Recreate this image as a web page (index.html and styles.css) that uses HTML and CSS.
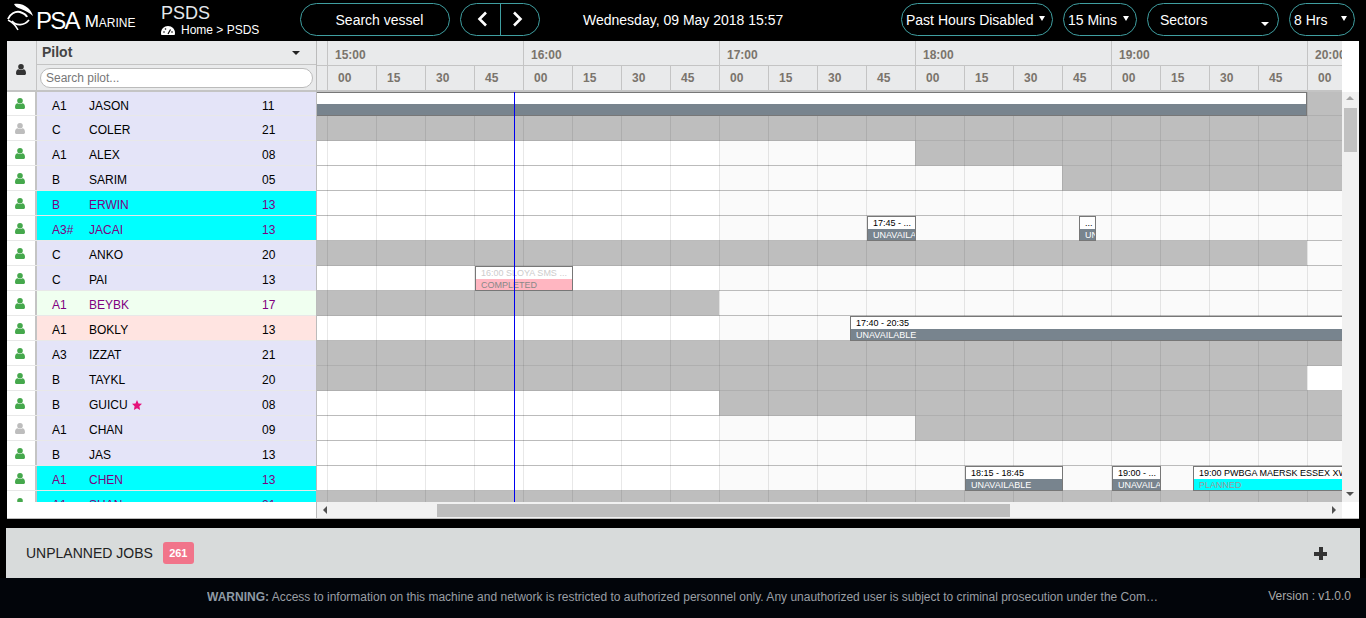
FILE: index.html
```html
<!DOCTYPE html>
<html lang="en">
<head>
  <meta charset="UTF-8">
  <title>PSDS - PSA Marine</title>
  <link rel="stylesheet" href="styles.css">
</head>
<body>

<svg class="icon-defs" width="0" height="0">
  <symbol id="user" viewBox="0 0 10 11">
    <circle cx="5" cy="2.8" r="2.8"/>
    <path d="M0 9.2C0 6.6 1.2 5.2 2.6 5.2 3.3 5.8 4.1 6.1 5 6.1S6.7 5.8 7.4 5.2C8.8 5.2 10 6.6 10 9.2 10 10.3 9.3 11 8.4 11H1.6C.7 11 0 10.3 0 9.2Z"/>
  </symbol>
</svg>

<header class="topbar">
  <div class="logo">
    <svg class="logo-bird" viewBox="0 0 30 28" width="30" height="28">
      <path fill="#fff" d="M8 1C12 0 18 1 22 5 25 8 26 10 27 13 24 10 20 8 15 6 11 5 9 3 8 1Z"/>
      <path fill="none" stroke="#fff" stroke-width="2" d="M2 16C4 11 9 8 14 9 17 10 20 11 21 14"/>
      <path fill="none" stroke="#fff" stroke-width="1.800" d="M6 18C10 23 18 23 23 17"/>
      <path fill="none" stroke="#fff" stroke-width="1.500" d="M2 17C6 19 10 23 12 27"/>
    </svg>
    <span class="logo-psa">PSA</span>
    <span class="logo-marine">Marine</span>
  </div>
  <div class="crumbs">
    <div class="crumbs-title">PSDS</div>
    <div class="crumbs-path">
      <svg viewBox="0 0 14 9" width="14" height="9">
        <path fill="#fff" d="M7 0C3 0 0 3 0 7 0 8 .3 9 .5 9H13.500C13.700 9 14 8 14 7 14 3 11 0 7 0Z"/>
        <path stroke="#000" stroke-width="1.200" d="M7 8 9.500 3.500"/>
        <circle cx="3" cy="6" r=".8"/><circle cx="4.500" cy="3" r=".8"/><circle cx="11" cy="6" r=".8"/>
      </svg>
      <span>Home &gt; PSDS</span>
    </div>
  </div>
  <button class="pill pill-search">Search vessel</button>
  <div class="pill pill-nav">
    <button class="nav-btn nav-prev">
      <svg viewBox="0 0 10 16" width="10" height="16"><path d="M9 1.500 2.500 8 9 14.500" fill="none" stroke="#fff" stroke-width="2.600"/></svg>
    </button>
    <button class="nav-btn nav-next">
      <svg viewBox="0 0 10 16" width="10" height="16"><path d="M1 1.500 7.500 8 1 14.500" fill="none" stroke="#fff" stroke-width="2.600"/></svg>
    </button>
  </div>
  <div class="clock">Wednesday, 09 May 2018 15:57</div>
  <div class="filters">
    <div class="pill pill-select pill-past">Past Hours Disabled<i class="caret caret-high"></i></div>
    <div class="pill pill-select pill-mins">15 Mins<i class="caret caret-high"></i></div>
    <div class="pill pill-select pill-sectors">Sectors<i class="caret caret-low"></i></div>
    <div class="pill pill-select pill-hrs">8 Hrs<i class="caret caret-high"></i></div>
  </div>
</header>

<section class="sched">
  <div class="side">
    <div class="side-head">
      <div class="side-head-icon"><svg class="ico ico-dark"><use href="#user"/></svg></div>
      <div class="side-head-main">
        <div class="side-title">Pilot<i class="caret caret-dark"></i></div>
        <div class="side-search"><input type="text" placeholder="Search pilot..."></div>
      </div>
    </div>
    <div class="side-rows">
      <div class="pilot"><span class="pilot-icon"><svg class="ico"><use href="#user"/></svg></span><div class="pilot-info"><span>A1</span><span>JASON</span><span>11</span></div></div>
      <div class="pilot"><span class="pilot-icon"><svg class="ico ico-off"><use href="#user"/></svg></span><div class="pilot-info"><span>C</span><span>COLER</span><span>21</span></div></div>
      <div class="pilot"><span class="pilot-icon"><svg class="ico"><use href="#user"/></svg></span><div class="pilot-info"><span>A1</span><span>ALEX</span><span>08</span></div></div>
      <div class="pilot"><span class="pilot-icon"><svg class="ico"><use href="#user"/></svg></span><div class="pilot-info"><span>B</span><span>SARIM</span><span>05</span></div></div>
      <div class="pilot"><span class="pilot-icon"><svg class="ico"><use href="#user"/></svg></span><div class="pilot-info is-cyan"><span>B</span><span>ERWIN</span><span>13</span></div></div>
      <div class="pilot"><span class="pilot-icon"><svg class="ico"><use href="#user"/></svg></span><div class="pilot-info is-cyan"><span>A3#</span><span>JACAI</span><span>13</span></div></div>
      <div class="pilot"><span class="pilot-icon"><svg class="ico"><use href="#user"/></svg></span><div class="pilot-info"><span>C</span><span>ANKO</span><span>20</span></div></div>
      <div class="pilot"><span class="pilot-icon"><svg class="ico"><use href="#user"/></svg></span><div class="pilot-info"><span>C</span><span>PAI</span><span>13</span></div></div>
      <div class="pilot"><span class="pilot-icon"><svg class="ico"><use href="#user"/></svg></span><div class="pilot-info is-green"><span>A1</span><span>BEYBK</span><span>17</span></div></div>
      <div class="pilot"><span class="pilot-icon"><svg class="ico"><use href="#user"/></svg></span><div class="pilot-info is-rose"><span>A1</span><span>BOKLY</span><span>13</span></div></div>
      <div class="pilot"><span class="pilot-icon"><svg class="ico"><use href="#user"/></svg></span><div class="pilot-info"><span>A3</span><span>IZZAT</span><span>21</span></div></div>
      <div class="pilot"><span class="pilot-icon"><svg class="ico"><use href="#user"/></svg></span><div class="pilot-info"><span>B</span><span>TAYKL</span><span>20</span></div></div>
      <div class="pilot"><span class="pilot-icon"><svg class="ico"><use href="#user"/></svg></span><div class="pilot-info"><span>B</span><span>GUICU <svg class="star" viewBox="0 0 20 20" width="10" height="10"><path d="M10 0l3 6.800 7 .8-5.200 4.800L16.200 20 10 16.300 3.800 20l1.400-7.600L0 7.600l7-.8Z"/></svg></span><span>08</span></div></div>
      <div class="pilot"><span class="pilot-icon"><svg class="ico ico-off"><use href="#user"/></svg></span><div class="pilot-info"><span>A1</span><span>CHAN</span><span>09</span></div></div>
      <div class="pilot"><span class="pilot-icon"><svg class="ico"><use href="#user"/></svg></span><div class="pilot-info"><span>B</span><span>JAS</span><span>13</span></div></div>
      <div class="pilot"><span class="pilot-icon"><svg class="ico"><use href="#user"/></svg></span><div class="pilot-info is-cyan"><span>A1</span><span>CHEN</span><span>13</span></div></div>
      <div class="pilot"><span class="pilot-icon"><svg class="ico"><use href="#user"/></svg></span><div class="pilot-info is-cyan"><span>A1</span><span>SHAN</span><span>21</span></div></div>
    </div>
    <div class="side-foot"></div>
  </div>

  <div class="main">
    <div class="time-head">
      <div class="time-cols">
        <div class="hours">
          <div class="hour-gap"></div>
          <div class="hour">15:00</div><div class="hour">16:00</div><div class="hour">17:00</div>
          <div class="hour">18:00</div><div class="hour">19:00</div><div class="hour">20:00</div>
        </div>
        <div class="quarters">
          <div class="hour-gap"></div>
          <div class="qtr">00</div><div class="qtr">15</div><div class="qtr">30</div><div class="qtr">45</div>
          <div class="qtr">00</div><div class="qtr">15</div><div class="qtr">30</div><div class="qtr">45</div>
          <div class="qtr">00</div><div class="qtr">15</div><div class="qtr">30</div><div class="qtr">45</div>
          <div class="qtr">00</div><div class="qtr">15</div><div class="qtr">30</div><div class="qtr">45</div>
          <div class="qtr">00</div><div class="qtr">15</div><div class="qtr">30</div><div class="qtr">45</div>
          <div class="qtr">00</div>
        </div>
      </div>
    </div>

    <div class="body">
      <div class="rows">
        <div class="grid-lines"></div>
        <div class="now-line"></div>

        <div class="row"><i class="seg white" style="width:990px"></i><i class="seg grey"></i>
          <div class="event" style="left:-2px;width:992px"><b></b><em class="ev-off"></em></div>
        </div>
        <div class="row"><i class="seg grey"></i></div>
        <div class="row"><i class="seg white" style="width:402px"></i><i class="seg light" style="width:196px"></i><i class="seg grey"></i></div>
        <div class="row"><i class="seg white" style="width:402px"></i><i class="seg light" style="width:343px"></i><i class="seg grey"></i></div>
        <div class="row"><i class="seg white" style="width:402px"></i><i class="seg light"></i></div>
        <div class="row"><i class="seg white" style="width:402px"></i><i class="seg light"></i>
          <div class="event" style="left:550px;width:49px"><b>17:45 - ...</b><em class="ev-off">UNAVAILABLE</em></div>
          <div class="event" style="left:762px;width:17px"><b>...</b><em class="ev-off">UNAVAILABLE</em></div>
        </div>
        <div class="row"><i class="seg grey" style="width:990px"></i><i class="seg light"></i></div>
        <div class="row"><i class="seg white" style="width:402px"></i><i class="seg light"></i>
          <div class="event ev-done" style="left:158px;width:98px"><b>16:00 SLOYA SMS ...</b><em>COMPLETED</em></div>
        </div>
        <div class="row"><i class="seg grey" style="width:402px"></i><i class="seg light"></i></div>
        <div class="row"><i class="seg white" style="width:402px"></i><i class="seg light"></i>
          <div class="event" style="left:533px;width:500px"><b>17:40 - 20:35</b><em class="ev-off">UNAVAILABLE</em></div>
        </div>
        <div class="row"><i class="seg grey"></i></div>
        <div class="row"><i class="seg grey" style="width:990px"></i><i class="seg white"></i></div>
        <div class="row"><i class="seg white" style="width:402px"></i><i class="seg grey"></i></div>
        <div class="row"><i class="seg white" style="width:402px"></i><i class="seg light" style="width:196px"></i><i class="seg grey"></i></div>
        <div class="row"><i class="seg white" style="width:402px"></i><i class="seg light"></i></div>
        <div class="row"><i class="seg white" style="width:402px"></i><i class="seg light"></i>
          <div class="event" style="left:648px;width:98px"><b>18:15 - 18:45</b><em class="ev-off">UNAVAILABLE</em></div>
          <div class="event" style="left:795px;width:49px"><b>19:00 - ...</b><em class="ev-off">UNAVAILABLE</em></div>
          <div class="event ev-plan" style="left:876px;width:200px"><b>19:00 PWBGA MAERSK ESSEX XW</b><em>PLANNED</em></div>
        </div>
        <div class="row"><i class="seg grey"></i></div>
      </div>
      <div class="vbar">
        <i class="arrow arrow-up"></i>
        <div class="vbar-thumb"></div>
        <i class="arrow arrow-down"></i>
      </div>
    </div>

    <div class="hbar-row">
      <div class="hbar">
        <i class="arrow arrow-left"></i>
        <div class="hbar-thumb"></div>
        <i class="arrow arrow-right"></i>
      </div>
    </div>
  </div>
</section>

<section class="unplanned">
  <span class="unplanned-title">UNPLANNED JOBS</span>
  <span class="badge">261</span>
  <span class="plus"></span>
</section>

<footer class="foot">
  <div class="foot-warning"><b>WARNING:</b> Access to information on this machine and network is restricted to authorized personnel only. Any unauthorized user is subject to criminal prosecution under the Com…</div>
  <div class="foot-version">Version : v1.0.0</div>
</footer>

</body>
</html>
```

FILE: styles.css
```css
* { box-sizing: border-box; }
html, body { height: 100%; }
body { margin: 0; background: #000; font-family: "Liberation Sans", Arial, sans-serif; color: #000; overflow: hidden; display: flex; flex-direction: column; height: 618px; }
button { font-family: inherit; color: inherit; background: none; cursor: pointer; }
.icon-defs { position: absolute; }

/* top bar */
.topbar { height: 41px; display: flex; align-items: center; color: #fff; flex: none; }
.logo { width: 161px; padding-left: 6px; display: flex; align-items: center; height: 41px; }
.logo-bird { margin-top: -7px; flex: none; }
.logo-psa { font-size: 24px; letter-spacing: -1.800px; line-height: 26px; margin-top: 1px; }
.logo-marine { font-size: 17px; font-variant: small-caps; margin: 3px 0 0 6px; line-height: 26px; }
.crumbs { width: 139px; height: 41px; padding-top: 3px; }
.crumbs-title { font-size: 18px; line-height: 20px; color: #e4e8ec; }
.crumbs-path { font-size: 12px; line-height: 14px; display: flex; align-items: center; }
.crumbs-path span { margin-left: 6px; }
.pill { height: 33px; border: 1px solid #3f9ea0; border-radius: 17px; font-size: 14px; color: #fff; display: flex; align-items: center; padding-top: 1px; }
.pill-search { width: 150px; justify-content: center; margin-top: -3px; padding: 2px 0 0 9px; }
.pill-nav { width: 80px; margin: -3px 0 0 10px; padding: 0; }
.nav-btn { flex: 1; height: 100%; border: none; padding: 0; display: flex; align-items: center; justify-content: center; }
.nav-prev { padding-left: 3px; }
.nav-next { border-left: 1px solid #3f9ea0; padding-right: 3px; }
.clock { font-size: 14px; margin: -1px 0 0 43px; }
.filters { margin-left: auto; padding-right: 11px; display: flex; gap: 10px; margin-top: -3px; }
.pill-select { position: relative; padding-left: 4px; padding-top: 2px; }
.pill-past { width: 152px; }
.pill-mins { width: 74px; }
.pill-sectors { width: 132px; padding-left: 12px; }
.pill-hrs { width: 66px; }
.caret { position: absolute; width: 0; height: 0; border-left: 3.500px solid transparent; border-right: 3.500px solid transparent; border-top: 5px solid #fff; }
.caret-high { right: 7px; top: 12px; }
.pill-sectors .caret-low { right: 9px; top: 18px; border-left-width: 4px; border-right-width: 4px; border-top-width: 4px; }
.caret-dark { right: 16px; top: 10px; border-left-width: 4.500px; border-right-width: 4.500px; border-top: 4px solid #222; }

/* schedule */
.sched { margin: 0 7px; height: 478px; background: #fff; display: flex; flex: none; border-bottom: 1px solid #bbb; }
.side { width: 310px; flex: none; border-right: 1px solid #bbb; display: flex; flex-direction: column; }
.side-head { height: 51px; display: flex; background: #e9eaeb; flex: none; border-bottom: 2px solid #c4c4c4; }
.side-head-icon { width: 30px; background: #e9eaeb; border-right: 1px solid #c4c4c4; display: flex; align-items: center; justify-content: center; padding: 7px 1px 0 0; }
.side-head-main { flex: 1; }
.side-title { position: relative; height: 24px; border-bottom: 1px solid #c4c4c4; font-size: 14px; font-weight: bold; color: #444; padding: 3px 0 0 5px; }
.side-search { padding: 3px 3px 0; }
.side-search input { width: 273px; height: 20px; display: block; border: 1px solid #bbb; border-radius: 10px; padding: 0 5px; font: 12px "Liberation Sans", Arial, sans-serif; outline: none; }
.side-search input::placeholder { color: #777; }
.side-rows { height: 410px; overflow: hidden; flex: none; }
.side-foot { flex: 1; }
.pilot { height: 25px; display: flex; border-bottom: 1px solid #e8e8e8; }
.pilot:first-child { height: 24px; }
.pilot-icon { width: 30px; border-right: 2px solid #c4c4c4; display: flex; align-items: center; justify-content: center; padding-right: 3px; }
.pilot-info { flex: 1; display: grid; grid-template-columns: 37px 173px 1fr; padding: 3px 0 0 15px; align-items: center; font-size: 12px; background: #e4e4f8; }
.pilot:first-child .pilot-info { padding-top: 5px; }
.pilot-info.is-cyan { background: #0ff; color: #800080; }
.pilot-info.is-green { background: #f0fff0; color: #800080; }
.pilot-info.is-rose { background: #ffe4e1; }
.ico { display: block; width: 10px; height: 11px; fill: #45a84c; }
.ico-off { fill: #bdbdbd; }
.ico-dark { fill: #333; }
.star { fill: #e5107a; margin-left: 1px; vertical-align: -1px; }

/* timeline */
.main { flex: 1; display: flex; flex-direction: column; min-width: 0; }
.time-head { height: 51px; flex: none; }
.time-cols { width: 1025px; height: 51px; overflow: hidden; background: #e9eaeb; border-bottom: 2px solid #c4c4c4; }
.hours, .quarters { display: flex; color: #7a746c; font-weight: bold; font-size: 12px; }
.hours { height: 25px; border-bottom: 1px solid #c4c4c4; }
.quarters { height: 24px; }
.hour-gap { width: 10px; flex: none; }
.hour { width: 196px; flex: none; padding: 7px 0 0 7px; border-left: 1px solid #c4c4c4; }
.qtr { width: 49px; flex: none; padding: 5px 0 0 10px; border-left: 1px solid #c4c4c4; }
.body { height: 410px; display: flex; flex: none; }
.rows { width: 1025px; height: 410px; overflow: hidden; position: relative; flex: none; }
.grid-lines { position: absolute; inset: 0; z-index: 1; background-image: linear-gradient(to right, rgba(0, 0, 0, .09) 1px, transparent 1px); background-size: 49px 100%; background-position: 10px 0; }
.now-line { position: absolute; top: 0; bottom: 0; left: 197px; width: 1px; background: #0000f0; z-index: 3; }
.row { height: 25px; display: flex; position: relative; border-bottom: 1px solid #bbb; }
.now-line + .row { height: 24px; }
.seg { display: block; height: 100%; flex: none; }
.seg:last-of-type { flex: 1; }
.white { background: #fff; }
.light { background: #fafafa; }
.grey { background: #bebebe; height: calc(100% + 1px); border-bottom: 1px solid #afafaf; }
.event { position: absolute; top: 0; height: 25px; z-index: 2; border: 1px solid #777; font-size: 9px; line-height: 12px; display: flex; flex-direction: column; overflow: hidden; background: #fff; white-space: nowrap; }
.event b { font-weight: normal; height: 12px; padding-left: 5px; display: block; }
.event em { font-style: normal; height: 12px; padding-left: 5px; display: block; }
.now-line + .row .event { height: 24px; }
.ev-off { background: #78848e; color: #fff; }
.ev-done b { color: #ccc; }
.ev-done em { background: #ffb6c1; color: #888; }
.ev-plan em { background: #0ff; color: #999; }

/* scrollbars */
.vbar { width: 17px; background: #f1f1f1; position: relative; flex: none; }
.vbar-thumb { position: absolute; left: 2px; top: 16px; width: 13px; height: 44px; background: #c1c1c1; }
.hbar-row { height: 16px; flex: none; }
.hbar { width: 1025px; height: 16px; background: #f1f1f1; position: relative; }
.hbar-thumb { position: absolute; left: 120px; top: 2px; height: 13px; width: 573px; background: #bdbdbd; }
.arrow { position: absolute; width: 0; height: 0; border: 4px solid transparent; }
.arrow-up { left: 4px; top: 4px; border-bottom: 4px solid #a3a3a3; border-top: 0; }
.arrow-down { left: 4px; bottom: 6px; border-top: 4px solid #505050; border-bottom: 0; }
.arrow-left { left: 6px; top: 4px; border-right: 4px solid #505050; border-left: 0; }
.arrow-right { right: 6px; top: 4px; border-left: 4px solid #505050; border-right: 0; }

/* unplanned */
.unplanned { margin: 9px 6px 0; height: 50px; background: #d8dbdb; display: flex; align-items: center; padding-left: 20px; position: relative; flex: none; }
.unplanned-title { font-size: 14px; color: #222; }
.badge { margin-left: 10px; width: 31px; height: 22px; border-radius: 3px; background: #f1748a; color: #fff; font-size: 11px; font-weight: bold; display: flex; align-items: center; justify-content: center; }
.plus { position: absolute; right: 33px; top: 19px; width: 13px; height: 13px; background: linear-gradient(#333, #333) center / 13px 4px no-repeat, linear-gradient(#333, #333) center / 4px 13px no-repeat; }

/* footer */
.foot { height: 40px; background: #02050a; display: flex; align-items: center; padding: 0 15px 2px 207px; font-size: 12px; color: #9a9fa5; flex: none; }
.foot-warning { width: 951px; white-space: nowrap; overflow: hidden; flex: none; }
.foot-warning b { color: #8f9aa5; }
.foot-version { margin-left: auto; margin-top: -3px; color: #a8a8a8; }
```
